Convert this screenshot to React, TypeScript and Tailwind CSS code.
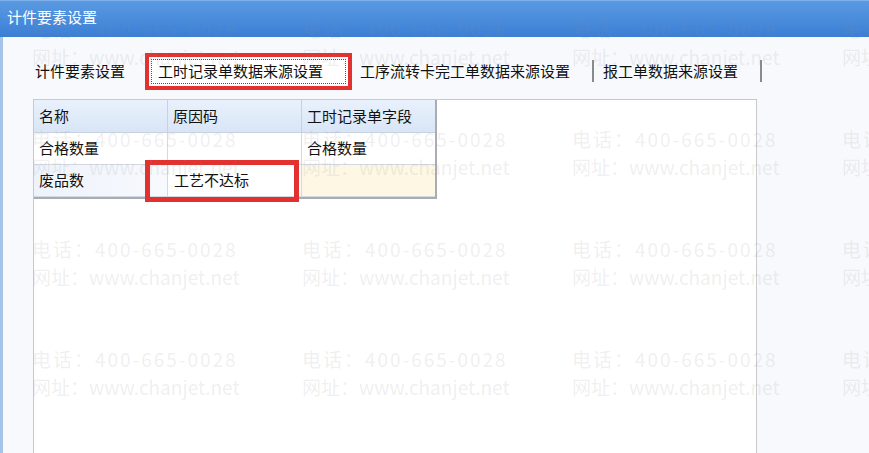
import React from 'react';

const font = { fontFamily: '"Noto Sans CJK SC", "Noto Sans", sans-serif' };

const rows = [
  { name: '合格数量', reason: '', field: '合格数量' },
  { name: '废品数', reason: '工艺不达标', field: '' },
];

function Watermark() {
  const cols = [32, 302, 572, 842];
  const lines = [15, 125, 235, 345];
  return (
    <div className="pointer-events-none absolute inset-0 overflow-hidden">
      {lines.map(top =>
        cols.map(left => (
          <div
            key={`${top}-${left}`}
            className="absolute whitespace-nowrap text-[19px] leading-[28px] text-[rgba(140,140,140,0.15)]"
            style={{ left, top }}
          >
            <div className="tracking-[2px]">电话：400-665-0028</div>
            <div>网址：www.chanjet.net</div>
          </div>
        ))
      )}
    </div>
  );
}

export default function App() {
  return (
    <div className="relative flex h-[453px] w-[869px] flex-col overflow-hidden bg-[#f7f9fc] text-[15px] text-[#111]" style={font}>
      {/* title bar */}
      <div className="flex h-[37px] items-center border-t border-[#7fb2ec] bg-gradient-to-b from-[#5a9ae2] to-[#3b7ed5] pl-[7px] pb-[3px] text-white">
        计件要素设置
      </div>

      <div className="flex flex-1 flex-col border-l-[3px] border-[#a6c3ea]">
        {/* tabs */}
        <div className="flex h-[62px] items-center pl-[32px] pt-[6px]">
          <span>计件要素设置</span>
          <div className="ml-[20px] flex h-[37px] w-[207px] items-center border-[4px] border-[#e2312f] bg-white p-[2px]">
            <div className="flex h-full w-full items-center border border-dotted border-[#555] pl-[6px]">
              工时记录单数据来源设置
            </div>
          </div>
          <span className="ml-[8px]">工序流转卡完工单数据来源设置</span>
          <span className="ml-[22px] h-[22px] w-[2px] bg-[#8a8a8a]" />
          <span className="ml-[9px]">报工单数据来源设置</span>
          <span className="ml-[22px] h-[22px] w-[2px] bg-[#8a8a8a]" />
        </div>

        {/* grid panel */}
        <div className="ml-[30px] flex-1 w-[724px] border-x border-t border-[#c9c9c9] bg-white">
          <div className="w-[403px] border-r-2 border-b-2 border-[#a9adb3]">
            <div className="grid h-[33px] grid-cols-[134px_134px_133px] bg-gradient-to-b from-[#e9f1fc] to-[#d8e5f6]">
              <div className="flex items-center border-r border-b border-[#c7d2e0] pl-[5px]">名称</div>
              <div className="flex items-center border-r border-b border-[#c7d2e0] pl-[5px]">原因码</div>
              <div className="flex items-center border-b border-[#c7d2e0] pl-[5px]">工时记录单字段</div>
            </div>
            {rows.map((r, i) => (
              <div key={i} className="grid h-[32px] grid-cols-[134px_134px_133px]">
                <div className={`flex items-center border-r border-b border-[#d3d9e2] pl-[5px] ${i === 1 ? 'bg-gradient-to-r from-[#eef3fb] to-[#f7f9fd]' : ''}`}>
                  {r.name}
                </div>
                <div className="relative flex items-center border-r border-b border-[#d3d9e2] pl-[6px]">
                  {r.reason}
                  {i === 1 && (
                    <div className="absolute left-[-23px] top-[-5px] h-[42px] w-[154px] border-[5px] border-[#e2312f]" />
                  )}
                </div>
                <div className={`flex items-center border-b border-[#d3d9e2] pl-[5px] ${i === 1 ? 'bg-[#fdf7e3]' : ''}`}>
                  {r.field}
                </div>
              </div>
            ))}
          </div>
        </div>
      </div>

      <Watermark />
    </div>
  );
}
